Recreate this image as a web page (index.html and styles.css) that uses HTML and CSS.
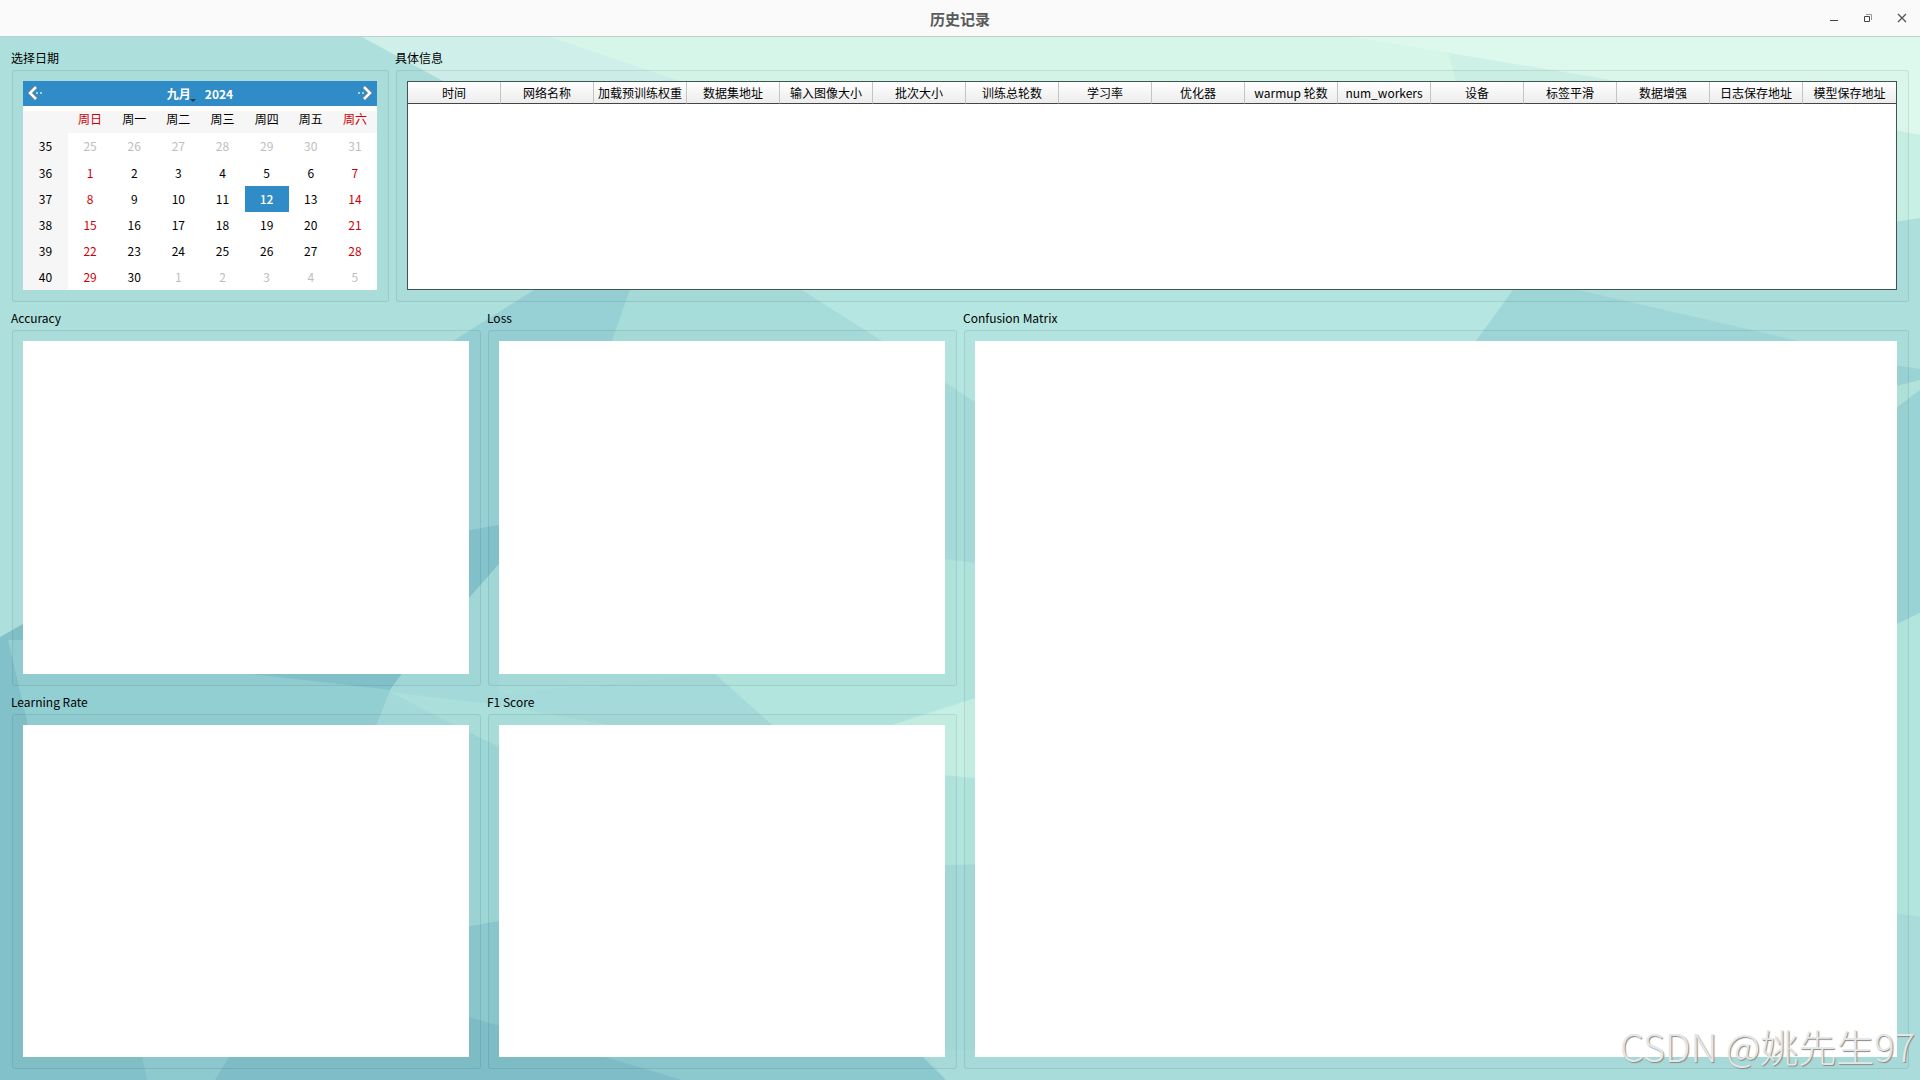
FILE: index.html
```html
<!DOCTYPE html>
<html lang="zh-CN">
<head>
<meta charset="utf-8">
<meta name="viewport" content="width=device-width, initial-scale=1">
<title>历史记录</title>
<link rel="stylesheet" href="styles.css">
</head>
<body>

<header class="titlebar">
  <h1>历史记录</h1>
  <div class="winbtns">
    <button type="button" aria-label="最小化"><svg width="10" height="10" viewBox="0 0 10 10"><path d="M1 7.5h8" stroke="#444"/></svg></button>
    <button type="button" aria-label="还原"><svg width="10" height="10" viewBox="0 0 10 10" fill="none"><path d="M3 1.5h5.500v5.500" stroke="#999"/><path d="M1.500 3.500h5v5h-5z" stroke="#444"/></svg></button>
    <button type="button" aria-label="关闭"><svg width="10" height="10" viewBox="0 0 10 10"><path d="M1 1l8 8M9 1l-8 8" stroke="#555" stroke-width="1.300"/></svg></button>
  </div>
</header>

<div class="window">
  <!-- low poly backdrop -->
  <svg class="backdrop" viewBox="0 37 1920 1043" preserveAspectRatio="none" aria-hidden="true">
    <path fill="#addfdc" d="M0 37h1920v1043H0z"/>
    <path fill="#cff0ea" d="M362 37L443 81 700 220H1300V37z"/>
    <path fill="#d6f6ea" d="M550 37L680 81 900 150H1920V37z"/>
    <path fill="#cdf1e6" d="M1448 52L1456 81 1470 130H1790L1618 81z"/>
    <path fill="#ddf9ed" d="M1354 37L1618 81 1920 135V37z"/>
    <path fill="#c8f0e4" d="M1800 112L1920 135V218L1800 236z"/>
    <path fill="#97d1d5" d="M534 290L650 180 630 290 612 341 520 620 469 597V341H453z"/>
    <path fill="#a6dcda" d="M630 290L650 200 802 290 882 341 975 402V564L715 674 469 700V597L560 520 612 341z"/>
    <path fill="#b6e6e1" d="M802 290L700 200H1553L1513 290 1476 341 1400 500 975 402 882 341z"/>
    <path fill="#9fd7d9" d="M1513 290L1530 250 1578 290 1799 341 1850 400H1450L1476 341z"/>
    <path fill="#b3e5df" d="M945 559L1000 566V868L945 865 800 760 772 725 715 674 700 600z"/>
    <path fill="#c6efe4" d="M892 725L1000 690V781L945 775z"/>
    <path fill="#a4dad9" d="M440 700L715 674 772 725 945 865 1000 864V1080H946L923 1057 480 921V725z"/>
    <path fill="#83c3cc" d="M440 535L499 525V564L402 674 390 690 250 674z"/>
    <path fill="#a3d9d9" d="M499 564V926L400 900 376 725 390 690 402 674z"/>
    <path fill="#82c1c9" d="M0 637L23 624 200 560 250 674 390 690 376 725V1080H0z"/>
    <path fill="#92cfd2" d="M8 640H200L250 674 390 690 376 725 350 800 70 800 28 725z"/>
    <path fill="#aadfdb" d="M390 692L499 705 620 727 499 747 454 725z"/>
    <path fill="#9dd6d6" d="M376 725H454L499 747V921L376 940z"/>
    <path fill="#8bc9cf" d="M376 939L469 926 499 921 905 1035 923 1057 946 1080H376z"/>
    <path fill="#7fbec8" d="M142 1057L376 990 469 1017 605 1057 682 1080H147z"/>
    <path fill="#8dcacf" d="M142 1057L140 1040H236L229 1057 215 1080H147z"/>
    <path fill="#a8dcda" d="M923 1050H1920V1080H946z"/>
    <path fill="#9ad3d6" d="M1880 363L1920 369V380L1880 391z"/>
    <path fill="#b1e3da" d="M1880 390L1920 380V390L1880 420z"/>
    <path fill="#9ad3d5" d="M1880 420L1920 390V613L1880 632z"/>
    <path fill="#b3e5df" d="M1880 632L1920 613V917L1880 911z"/>
    <path fill="#a9dcdb" d="M1880 911L1920 917V1080H1880z"/>
  </svg>

  <main class="layout">
    <div class="top">
      <section class="group group-date">
        <h2>选择日期</h2>
        <div class="box">
          <div class="calendar">
            <div class="cal-nav">
              <button type="button" aria-label="上个月"><svg width="16" height="16" viewBox="0 0 16 16" fill="none"><path d="M9 1L3 7l6 6" stroke="#6c7f8c" stroke-width="4"/><path d="M9 1L3 7l6 6" stroke="#fff" stroke-width="2.500"/><circle cx="10" cy="7" r="1" fill="#dce6ec"/><circle cx="14" cy="7" r="1" fill="#dce6ec"/></svg></button>
              <div class="cal-title">
                <button type="button" class="month">九月</button>
                <button type="button">2024</button>
              </div>
              <button type="button" aria-label="下个月"><svg width="16" height="16" viewBox="0 0 16 16" fill="none"><path d="M7 1l6 6-6 6" stroke="#6c7f8c" stroke-width="4"/><path d="M7 1l6 6-6 6" stroke="#fff" stroke-width="2.500"/><circle cx="6" cy="7" r="1" fill="#dce6ec"/><circle cx="2" cy="7" r="1" fill="#dce6ec"/></svg></button>
            </div>
            <table class="days">
              <thead>
                <tr><th class="week"></th><th class="red">周日</th><th>周一</th><th>周二</th><th>周三</th><th>周四</th><th>周五</th><th class="red">周六</th></tr>
              </thead>
              <tbody>
                <tr><th>35</th><td class="off">25</td><td class="off">26</td><td class="off">27</td><td class="off">28</td><td class="off">29</td><td class="off">30</td><td class="off">31</td></tr>
                <tr><th>36</th><td class="red">1</td><td>2</td><td>3</td><td>4</td><td>5</td><td>6</td><td class="red">7</td></tr>
                <tr><th>37</th><td class="red">8</td><td>9</td><td>10</td><td>11</td><td class="selected">12</td><td>13</td><td class="red">14</td></tr>
                <tr><th>38</th><td class="red">15</td><td>16</td><td>17</td><td>18</td><td>19</td><td>20</td><td class="red">21</td></tr>
                <tr><th>39</th><td class="red">22</td><td>23</td><td>24</td><td>25</td><td>26</td><td>27</td><td class="red">28</td></tr>
                <tr><th>40</th><td class="red">29</td><td>30</td><td class="off">1</td><td class="off">2</td><td class="off">3</td><td class="off">4</td><td class="off">5</td></tr>
              </tbody>
            </table>
          </div>
        </div>
      </section>

      <section class="group group-info">
        <h2>具体信息</h2>
        <div class="box">
          <div class="info">
            <table>
              <thead>
                <tr>
                  <th>时间</th>
                  <th>网络名称</th>
                  <th>加载预训练权重</th>
                  <th>数据集地址</th>
                  <th>输入图像大小</th>
                  <th>批次大小</th>
                  <th>训练总轮数</th>
                  <th>学习率</th>
                  <th>优化器</th>
                  <th>warmup 轮数</th>
                  <th>num_workers</th>
                  <th>设备</th>
                  <th>标签平滑</th>
                  <th>数据增强</th>
                  <th>日志保存地址</th>
                  <th>模型保存地址</th>
                </tr>
              </thead>
            </table>
          </div>
        </div>
      </section>
    </div>

    <div class="charts">
      <section class="group">
        <h2>Accuracy</h2>
        <div class="box"><div class="plot"></div></div>
      </section>
      <section class="group">
        <h2>Loss</h2>
        <div class="box"><div class="plot"></div></div>
      </section>
      <section class="group matrix">
        <h2>Confusion Matrix</h2>
        <div class="box"><div class="plot"></div></div>
      </section>
      <section class="group">
        <h2>Learning Rate</h2>
        <div class="box"><div class="plot"></div></div>
      </section>
      <section class="group">
        <h2>F1 Score</h2>
        <div class="box"><div class="plot"></div></div>
      </section>
    </div>
  </main>

  <div class="watermark">CSDN @姚先生97</div>
</div>

</body>
</html>
```
FILE: styles.css
```css
* {
  box-sizing: border-box;
}

body {
  margin: 0;
  min-height: 100vh;
  display: flex;
  flex-direction: column;
  font-family: "Noto Sans CJK SC", "Noto Sans", sans-serif;
  font-size: 12px;
  color: #000;
}

button {
  padding: 0;
  border: none;
  background: none;
  color: inherit;
  font: inherit;
  cursor: pointer;
}

svg {
  display: block;
}

h1, h2 {
  margin: 0;
}

/* title bar */
.titlebar {
  display: grid;
  grid-template-columns: 1fr auto 1fr;
  align-items: center;
  height: 37px;
  background: #fafafa;
  border-bottom: 1px solid #bdd0ca;
}

.titlebar h1 {
  grid-column: 2;
  padding-top: 2px;
  font-size: 15px;
  line-height: 34px;
  color: #5a5a5a;
}

.winbtns {
  display: flex;
  justify-content: flex-end;
  padding-right: 1px;
}

.winbtns button {
  display: flex;
  align-items: center;
  justify-content: center;
  width: 34px;
  height: 36px;
}

.window {
  position: relative;
  flex: 1;
  display: flex;
}

.backdrop {
  position: absolute;
  width: 100%;
  height: 100%;
}

.layout {
  position: relative;
  flex: 1;
  display: flex;
  flex-direction: column;
  gap: 4px;
  padding: 9px 11px 11px 12px;
}

.top {
  display: flex;
  gap: 7px;
}

.charts {
  flex: 1;
  display: grid;
  grid-template-columns: repeat(4, 1fr);
  grid-template-rows: 1fr 1fr;
  gap: 4px 7px;
}

.matrix {
  grid-column: 3 / 5;
  grid-row: 1 / 3;
}

/* group boxes */
.group {
  display: flex;
  flex-direction: column;
}

.group-date {
  width: 377px;
}

.group-info {
  flex: 1;
}

.group h2 {
  margin-left: -1px;
  font-size: 12px;
  font-weight: normal;
  line-height: 24px;
}

.box {
  flex: 1;
  display: flex;
  padding: 10px 11px 11px 10px;
  border: 1px solid rgba(0, 40, 40, 0.1);
  border-radius: 3px;
  background: rgba(0, 40, 40, 0.01);
}

.plot {
  flex: 1;
  background: #fff;
}

/* calendar */
.calendar {
  flex: 1;
  background: #fff;
}

.cal-nav {
  display: flex;
  align-items: center;
  justify-content: space-between;
  height: 25px;
  padding: 0 4px;
  background: #308cc6;
  color: #fff;
  font-weight: bold;
}

.cal-title {
  display: flex;
  gap: 14px;
}

.month {
  position: relative;
}

.month::after {
  content: "";
  position: absolute;
  right: -5px;
  bottom: 0;
  border: 3px solid transparent;
  border-top-color: #173f5a;
  border-bottom: none;
}

.days {
  width: 100%;
  table-layout: fixed;
  border-collapse: collapse;
}

.days th, .days td {
  height: 26px;
  padding: 0;
  text-align: center;
  font-weight: normal;
  line-height: 18px;
}

.days thead th, .days tbody tr:first-child td {
  height: 27px;
}

.days thead th, .days tbody tr:first-child > * {
  padding-bottom: 2px;
}

.days th {
  background: #f6f6f6;
}

.days thead th {
  background: linear-gradient(#fff 5px, #f6f6f6 5px);
}

.days .week {
  width: 45px;
}

.days .red {
  color: #d00008;
}

.days .off {
  color: #bebebe;
}

.days .selected {
  background: #308cc6;
  color: #fff;
  font-weight: 500;
}

/* training record table */
.info {
  flex: 1;
  border: 1px solid #3f5453;
  background: #fff;
}

.info table {
  width: 100%;
  table-layout: fixed;
  border-collapse: separate;
  border-spacing: 0;
}

.info th {
  height: 22px;
  padding: 0;
  border-right: 1px solid #c4c4c4;
  border-bottom: 1px solid #444;
  background: linear-gradient(#fff, #ececec);
  font-weight: normal;
  line-height: 18px;
  white-space: nowrap;
}

.info th:last-child {
  border-right: none;
}

.watermark {
  position: absolute;
  right: 5px;
  bottom: 8px;
  font-size: 38px;
  font-weight: 300;
  line-height: 52px;
  color: #e4e7e7;
  text-shadow: 1px 1px 1px #888;
}
```
